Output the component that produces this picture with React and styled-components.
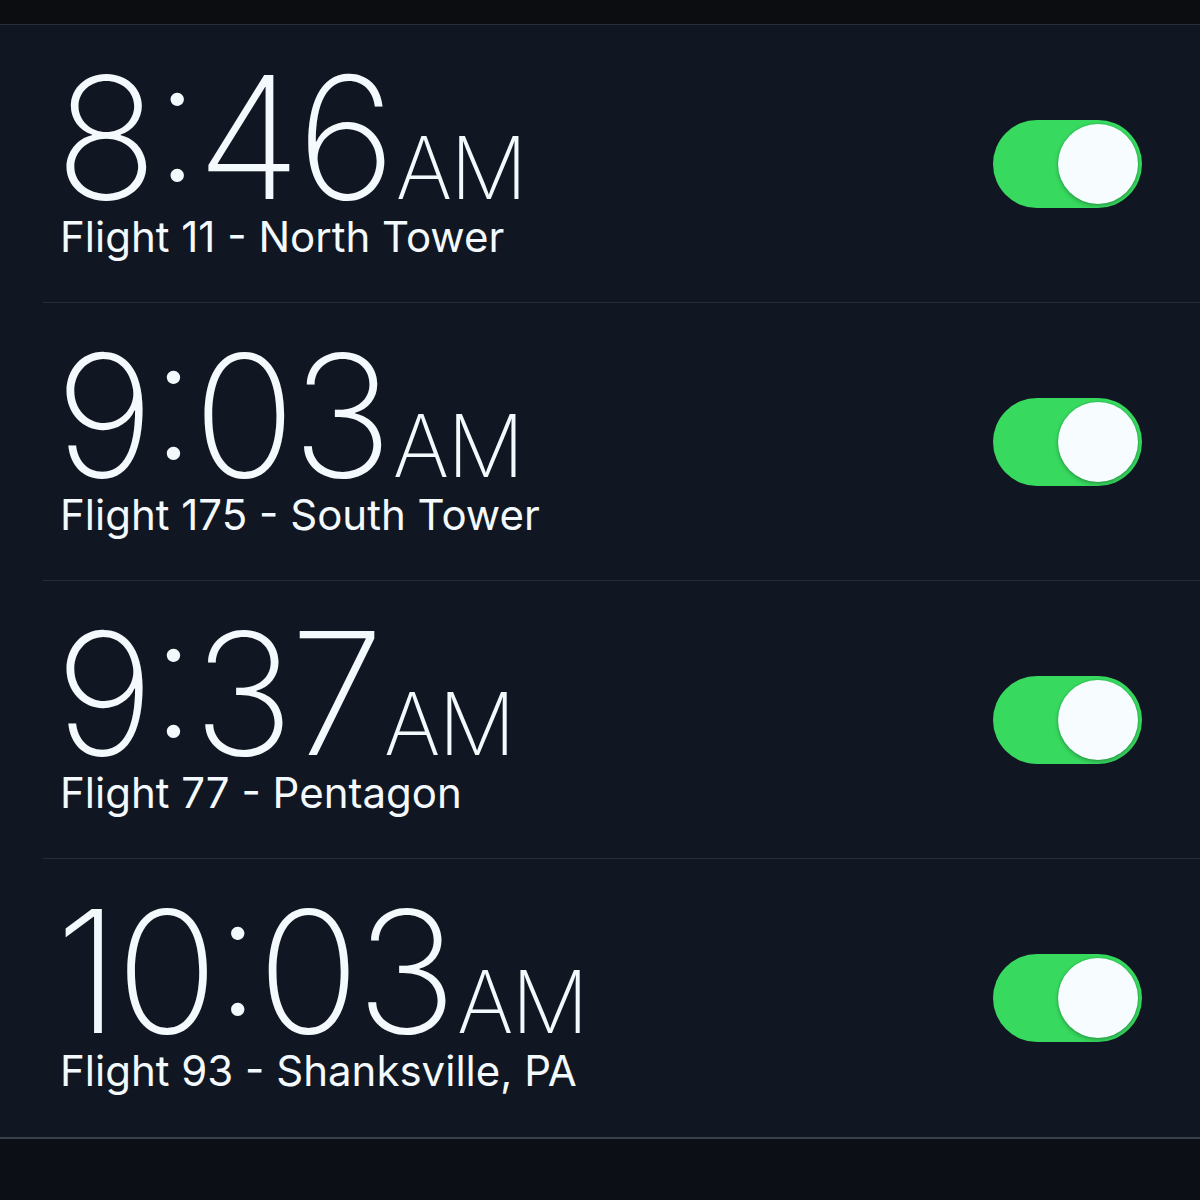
import React from 'react'
import styled, { createGlobalStyle } from "styled-components"

const alarms = [
    { time: "8:46", label: "Flight 11 - North Tower" },
    { time: "9:03", label: "Flight 175 - South Tower" },
    { time: "9:37", label: "Flight 77 - Pentagon" },
    { time: "10:03", label: "Flight 93 - Shanksville, PA" },
]

const GlobalStyle = createGlobalStyle`
    html, body {
        margin: 0;
        padding: 0;
        background: #0d0f16;
    }
    body {
        font-family: Inter, "Noto Sans", sans-serif;
        -webkit-font-smoothing: antialiased;
    }
`

const App = () => {
    return (
        <Screen>
            <GlobalStyle />
            <StatusStrip />
            <AlarmList>
                {alarms.map((a) => (
                    <AlarmRow key={a.time}>
                        <TextBlock>
                            <Time>
                                {a.time}<Meridiem>AM</Meridiem>
                            </Time>
                            <Label>{a.label}</Label>
                        </TextBlock>
                        <Toggle on>
                            <Knob />
                        </Toggle>
                    </AlarmRow>
                ))}
            </AlarmList>
            <Footer />
        </Screen>
    )
}

const Screen = styled.div`
    width: 1200px;
    height: 1200px;
    display: flex;
    flex-direction: column;
    background: #0d0f16;
    overflow: hidden;
`
const StatusStrip = styled.div`
    height: 24px;
    background: #0b0d11;
    border-bottom: 1px solid #2a2f3b;
`
const AlarmList = styled.div`
    background: #111722;
    border-bottom: 2px solid #3a404b;
`
const AlarmRow = styled.div`
    height: 277px;
    margin-left: 43px;
    padding: 0 58px 0 17px;
    display: flex;
    align-items: center;
    justify-content: space-between;
    border-bottom: 1px solid #24293c;

    &:last-child {
        border-bottom: none;
        height: 278px;
    }
`
const TextBlock = styled.div`
    align-self: flex-start;
    display: flex;
    flex-direction: column;
    color: #f3f9fc;
    padding-top: 42px;
`
const Time = styled.div`
    font-size: 170px;
    font-weight: 200;
    line-height: 140px;
    letter-spacing: -4px;
    margin-left: -5px;
    font-feature-settings: "calt" 1;
`
const Meridiem = styled.span`
    font-size: 86px;
    font-weight: 250;
    line-height: 0;
    letter-spacing: -2px;
    margin-left: 4px;
`
const Label = styled.div`
    font-size: 42px;
    font-weight: 400;
    line-height: 50px;
    margin-top: 5px;
`
const Toggle = styled.div`
    width: 149px;
    height: 88px;
    border-radius: 44px;
    background: ${p => p.on ? "#37d95f" : "#3a3f4a"};
    display: flex;
    align-items: center;
    justify-content: ${p => p.on ? "flex-end" : "flex-start"};
    padding: 0 4px;
    box-sizing: border-box;
`
const Knob = styled.div`
    width: 80px;
    height: 80px;
    border-radius: 50%;
    background: #f6fcff;
    box-shadow: 0 2px 4px rgba(0,0,0,0.25), 0 0 0 1px rgba(0,0,0,0.06);
`
const Footer = styled.div`
    flex: 1;
    background: #0d0f16;
`

export default App
